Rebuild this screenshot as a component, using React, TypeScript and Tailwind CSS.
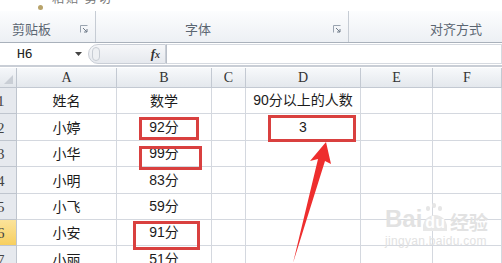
const cols = ["A", "B", "C", "D", "E", "F"];
const rowH = ["h-[26px]", "h-[27px]", "h-[26px]", "h-[27px]", "h-[26px]", "h-[26px]", "h-[27px]"];

const data: string[][] = [
  ["姓名", "数学", "", "90分以上的人数", "", ""],
  ["小婷", "92分", "", "3", "", ""],
  ["小华", "99分", "", "", "", ""],
  ["小明", "83分", "", "", "", ""],
  ["小飞", "59分", "", "", "", ""],
  ["小安", "91分", "", "", "", ""],
  ["小丽", "51分", "", "", "", ""],
];

function Launcher() {
  return (
    <svg width="8" height="8" viewBox="0 0 8 8" className="absolute bottom-[9px] right-[7px]">
      <path d="M0.5 7.5V0.5H7.5" fill="none" stroke="#9aa4b0" />
      <path d="M3 3L7 7M7 4V7H4" fill="none" stroke="#6f7b88" />
    </svg>
  );
}

export default function App() {
  return (
    <div className="relative w-[502px] h-[263px] overflow-hidden bg-white font-['Noto_Sans_CJK_SC',sans-serif] text-[#1b1b1b]">
      {/* top strip of ribbon buttons, cut off */}
      <div className="h-[11px] bg-white relative overflow-hidden">
        <span className="absolute left-[38px] top-[5px] w-[5px] h-[5px] rounded-full bg-[#b8a36a]" />
        <span className="absolute left-[52px] top-[-11px] text-[12px] text-[#777] tracking-[2px]">粘贴 剪切</span>
      </div>

      {/* ribbon group labels */}
      <div className="flex h-[32px] bg-gradient-to-b from-[#fcfdfe] to-[#edf0f4] border-b border-[#a9b1bb] text-[13px] text-[#5b6672]">
        <div className="relative w-[96px] border-r border-[#c6ccd4] flex items-end pb-[4px] pl-[12px]">
          剪贴板
          <Launcher />
        </div>
        <div className="relative w-[253px] border-r border-[#c6ccd4] flex items-end justify-center pb-[4px] pr-[48px]">
          字体
          <Launcher />
        </div>
        <div className="flex-1 flex items-end justify-end pb-[4px] pr-[20px]">对齐方式</div>
      </div>

      {/* formula bar */}
      <div className="flex h-[24px] bg-white border-b-2 border-[#c9ced6] items-center">
        <div className="w-[88px] flex items-center justify-between pl-[17px] pr-[6px] font-['DejaVu_Sans_Mono',monospace] text-[13px] text-[#222]">
          H6
          <svg width="7" height="4" viewBox="0 0 7 4"><path d="M0 0H7L3.5 4Z" fill="#444" /></svg>
        </div>
        <div className="h-[20px] w-[78px] flex items-center justify-between rounded-l-full border border-[#c9ced6] bg-gradient-to-b from-[#f6f7f9] to-[#e6e9ee] pl-[3px] pr-[5px]">
          <span className="w-[8px] h-[14px] rounded-full border border-[#c8cdd4] bg-[#eef0f3]" />
          <span className="font-['Liberation_Serif',serif] italic font-bold text-[13px] text-[#333]">
            f<span className="text-[10px]">x</span>
          </span>
        </div>
        <div className="flex-1 h-[20px] border border-l-[#b9bfc8] border-[#d6dae0] bg-white" />
      </div>

      {/* grid */}
      <div className="grid grid-cols-[17px_100px_95px_34px_115px_72px_69px] mt-[1px]">
        <div className="h-[20px] bg-gradient-to-b from-[#f5f7fa] to-[#e2e6eb] border-r border-b border-[#bfc5ce] relative">
          <svg width="9" height="9" viewBox="0 0 9 9" className="absolute right-[3px] bottom-[3px]"><path d="M9 0V9H0Z" fill="#c9ced5" /></svg>
        </div>
        {cols.map((c) => (
          <div
            key={c}
            className="h-[20px] bg-gradient-to-b from-[#f7f9fb] to-[#e4e8ed] border-r border-b border-[#c3c9d2] flex items-center justify-center font-['Liberation_Serif',serif] text-[14px] text-[#333]"
          >
            {c}
          </div>
        ))}
        {data.map((row, r) => (
          <div key={r} className="contents">
            <div
              className={`${rowH[r]} border-r border-b border-[#bfc5ce] flex items-end pb-[1px] overflow-hidden font-['Liberation_Serif',serif] text-[15px] text-[#444] ${
                r === 5 ? "bg-gradient-to-b from-[#fbe39a] to-[#f7cf5e]" : "bg-[#e6e9ee]"
              }`}
            >
              <span className="-ml-[3px]">{r + 1}</span>
            </div>
            {row.map((v, i) => (
              <div
                key={i}
                className={`${rowH[r]} border-r border-b border-[#d4d8df] flex items-center justify-center text-[14px] whitespace-nowrap ${
                  /^\d/.test(v) ? "font-['Liberation_Sans','Noto_Sans_CJK_SC',sans-serif]" : ""
                }`}
              >
                {v}
              </div>
            ))}
          </div>
        ))}
      </div>

      {/* red highlight boxes */}
      <div className="absolute left-[139px] top-[117px] w-[60px] h-[23px] border-[3px] border-[#d9403f]" />
      <div className="absolute left-[139px] top-[146px] w-[63px] h-[24px] border-[3px] border-[#d9403f]" />
      <div className="absolute left-[133px] top-[221px] w-[67px] h-[29px] border-[3px] border-[#d9403f]" />
      <div className="absolute left-[268px] top-[115px] w-[88px] h-[27px] border-[3px] border-[#d9403f]" />

      {/* arrow */}
      <svg className="absolute left-0 top-0" width="502" height="263" viewBox="0 0 502 263">
        <polygon points="326,142 331,164 325,161 293,263 318,159 310,161" fill="#ee2e2e" />
      </svg>

      {/* watermark */}
      <div className="absolute left-[385px] top-[207px] flex flex-col items-start text-[#e2e2e2]">
        <div className="flex items-end gap-[1px] leading-none">
          <span className="font-['Liberation_Sans',sans-serif] font-bold text-[24px]">Bai</span>
          <span className="relative font-['Liberation_Sans',sans-serif] font-bold text-[16px] rounded-t-full bg-[#e8e8e8] text-white px-[2px]">
            du
            <span className="absolute left-[3px] -top-[9px] w-[4px] h-[5px] rounded-full bg-[#e6e6e6]" />
            <span className="absolute left-[9px] -top-[12px] w-[4px] h-[5px] rounded-full bg-[#e6e6e6]" />
            <span className="absolute left-[15px] -top-[9px] w-[4px] h-[5px] rounded-full bg-[#e6e6e6]" />
          </span>
          <span className="font-bold text-[19px] ml-[2px]">经验</span>
        </div>
        <span className="font-['Liberation_Sans',sans-serif] text-[12px] leading-none mt-[4px] tracking-[0.3px]">jingyan.baidu.com</span>
      </div>
    </div>
  );
}
